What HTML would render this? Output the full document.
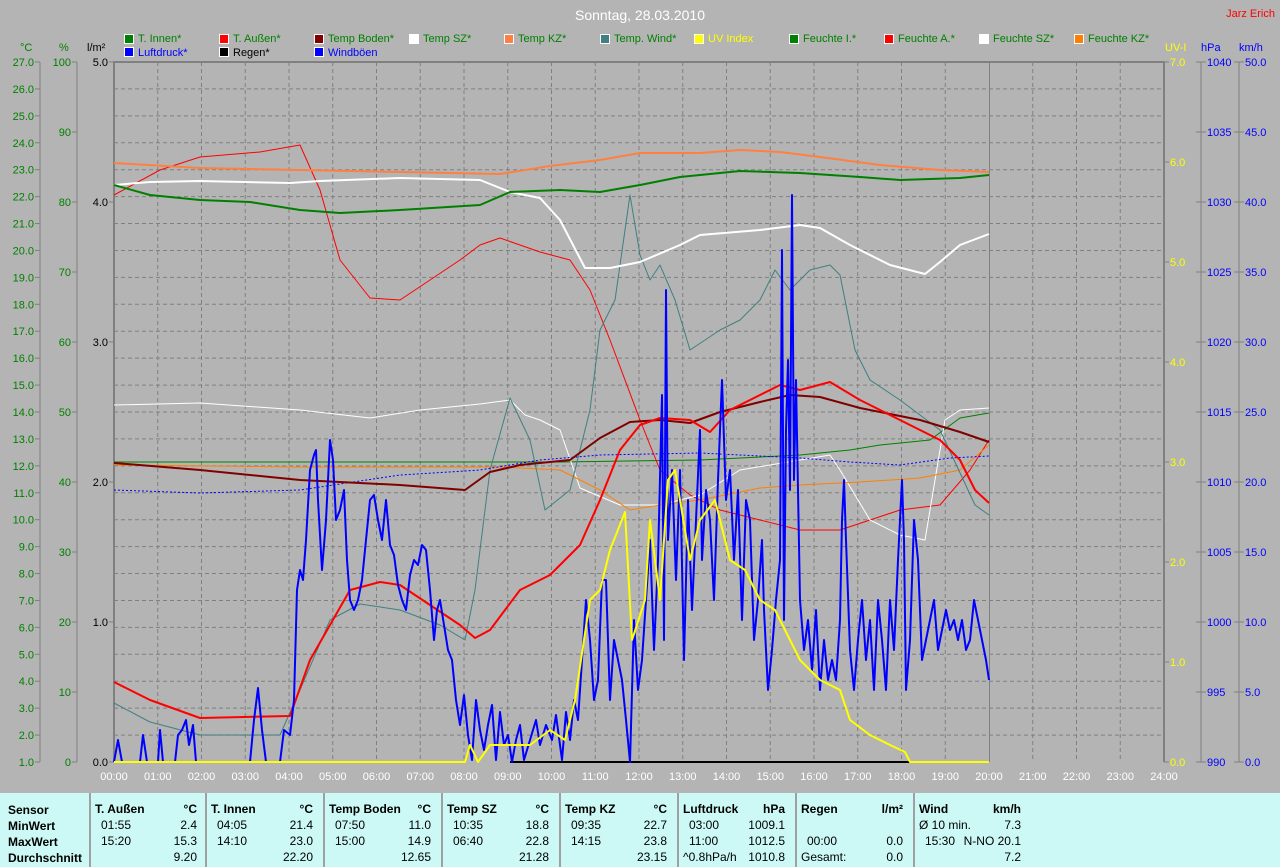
<!DOCTYPE html>
<html><head><meta charset="utf-8"><style>
body{margin:0;width:1280px;height:867px;overflow:hidden;background:#b4b4b4;font-family:"Liberation Sans",sans-serif}
svg{position:absolute;left:0;top:0}
#tbl{position:absolute;left:0;top:793px;width:1280px;height:74px;background:#ccf9f5;font-size:12px;color:#000}
.c{position:absolute;top:0;height:74px;border-left:2px solid #a0a0a0}
.r{position:absolute;white-space:nowrap}
b{font-weight:bold}
</style></head><body>
<svg width="1280" height="793" font-family="Liberation Sans, sans-serif" font-size="11">
<text x="640" y="20" fill="#fff" font-size="14" text-anchor="middle">Sonntag, 28.03.2010</text>
<text x="1275" y="17" fill="#f00" font-size="11" text-anchor="end">Jarz Erich</text>
<g stroke="#fff" stroke-width="1">
<rect x="124.5" y="34.5" width="9" height="9" fill="#008000"/><rect x="219.5" y="34.5" width="9" height="9" fill="#f00"/><rect x="314.5" y="34.5" width="9" height="9" fill="#800000"/><rect x="409.5" y="34.5" width="9" height="9" fill="#fff"/><rect x="504.5" y="34.5" width="9" height="9" fill="#ff8040"/><rect x="600.5" y="34.5" width="9" height="9" fill="#408080"/><rect x="694.5" y="34.5" width="9" height="9" fill="#ff0"/><rect x="789.5" y="34.5" width="9" height="9" fill="#008000"/><rect x="884.5" y="34.5" width="9" height="9" fill="#f00"/><rect x="979.5" y="34.5" width="9" height="9" fill="#fff"/><rect x="1074.5" y="34.5" width="9" height="9" fill="#ff8000"/>
<rect x="124.5" y="47.5" width="9" height="9" fill="#00f"/><rect x="219.5" y="47.5" width="9" height="9" fill="#000"/><rect x="314.5" y="47.5" width="9" height="9" fill="#00f"/>
</g>
<g fill="#008000"><text x="138" y="42">T. Innen*</text><text x="233" y="42">T. Außen*</text><text x="328" y="42">Temp Boden*</text><text x="423" y="42">Temp SZ*</text><text x="518" y="42">Temp KZ*</text><text x="614" y="42">Temp. Wind*</text><text x="803" y="42">Feuchte I.*</text><text x="898" y="42">Feuchte A.*</text><text x="993" y="42">Feuchte SZ*</text><text x="1088" y="42">Feuchte KZ*</text></g>
<text x="708" y="42" fill="#ff0">UV Index</text>
<text x="138" y="56" fill="#00f">Luftdruck*</text><text x="233" y="56" fill="#000">Regen*</text><text x="328" y="56" fill="#00f">Windböen</text>
<text x="20" y="51" fill="#008000">°C</text><text x="59" y="51" fill="#008000">%</text><text x="87" y="51" fill="#000">l/m²</text>
<text x="1165" y="51" fill="#ff0">UV-I</text><text x="1201" y="51" fill="#00f">hPa</text><text x="1239" y="51" fill="#00f">km/h</text>
<!-- grid -->
<g stroke="#808080" stroke-dasharray="4,3" stroke-width="1" id="grid"></g>
<g stroke="#808080" fill="none">
<line x1="40" y1="62" x2="40" y2="762"/><line x1="77" y1="62" x2="77" y2="762"/>
<line x1="1201" y1="62" x2="1201" y2="762"/><line x1="1239" y1="62" x2="1239" y2="762"/>
<line x1="989.5" y1="62" x2="989.5" y2="762"/>
<path d="M114 762V62H1164V762" stroke-width="2"/>
</g>
<g id="lab" font-size="11"></g>
<!-- series -->
<g fill="none" stroke-linejoin="round">
<polyline stroke="#008000" stroke-width="1" points="114,462 300,462 560,462 700,460 800,455 850,450 880,445 930,440 960,418 989,413"/>
<polyline stroke="#f00" stroke-width="1" points="114,195 160,170 200,157 260,152 300,145 320,190 340,260 370,298 400,300 430,280 460,260 480,245 500,238 520,245 540,252 570,260 590,290 610,340 640,420 660,470 690,495 720,510 760,520 800,530 840,530 870,520 900,510 940,505 970,470 989,440"/>
<polyline stroke="#fff" stroke-width="1" points="114,405 200,403 300,410 370,418 420,410 480,404 510,400 525,415 540,420 560,430 580,488 620,505 660,505 700,495 740,470 800,460 830,455 840,470 870,520 900,535 925,540 945,420 960,410 989,408"/>
<polyline stroke="#ff8000" stroke-width="1" points="114,465 300,467 500,467 560,470 600,490 630,510 660,505 700,500 760,488 800,485 860,482 920,478 960,470 989,445"/>
<polyline stroke="#408080" stroke-width="1" points="114,703 150,722 200,735 280,735 300,690 330,620 360,604 400,610 440,625 465,640 475,590 490,470 510,398 530,440 545,510 570,490 590,410 600,330 615,300 625,230 630,195 640,255 650,280 660,265 675,300 690,350 705,340 720,330 740,320 760,300 775,270 790,290 810,270 830,265 840,275 855,350 870,380 900,400 940,430 975,505 989,515"/>
<polyline stroke="#00f" stroke-width="1" stroke-dasharray="2,2" points="114,490 200,493 300,490 400,475 480,470 540,460 600,455 700,453 800,458 850,462 900,465 950,458 989,456"/>
<polyline stroke="#000" stroke-width="2" points="510,762 989,762"/>
<polyline stroke="#ff8040" stroke-width="2" points="114,163 200,168 300,170 400,172 500,174 550,166 600,160 640,153 700,153 740,150 780,152 820,157 880,165 940,170 989,172"/>
<polyline stroke="#fff" stroke-width="2" points="114,185 150,182 200,181 290,183 320,181 400,178 480,180 510,192 540,198 560,220 585,268 610,268 640,262 680,245 700,235 760,230 800,225 820,228 850,245 890,265 925,274 940,262 960,245 989,234"/>
<polyline stroke="#008000" stroke-width="2" points="114,185 150,195 200,200 250,202 300,210 340,213 400,210 480,205 510,192 560,190 600,192 640,185 680,177 740,171 800,173 860,177 900,180 960,178 989,175"/>
<polyline stroke="#800000" stroke-width="2" points="114,463 200,470 300,480 400,485 465,490 490,472 520,465 570,460 600,438 630,422 660,420 690,423 720,412 760,402 790,395 820,397 860,408 920,420 960,432 989,442"/>
<polyline stroke="#f00" stroke-width="2" points="114,682 150,700 200,718 290,716 310,660 350,590 380,582 400,585 430,605 460,625 475,638 490,630 520,590 550,575 580,545 600,500 620,450 640,425 660,418 690,420 710,432 730,410 780,385 800,390 830,382 860,400 900,420 940,440 960,460 975,490 989,503"/>
<polyline stroke="#00f" stroke-width="2" points="114,762 118,740 122,762 140,762 143,735 147,762 158,762 160,730 163,762 175,762 178,735 182,730 186,720 189,745 193,725 196,762 250,762 254,720 258,688 262,730 266,762 280,762 284,730 290,735 294,700 297,590 300,570 303,580 306,540 310,470 314,455 316,450 318,500 322,570 326,520 330,440 333,460 336,520 340,510 344,490 347,560 350,600 354,610 358,600 362,580 366,540 370,500 374,495 378,520 382,540 386,500 390,545 394,555 398,585 402,600 406,610 410,575 414,560 418,565 422,545 426,550 430,590 434,640 437,610 440,600 444,625 448,650 452,660 456,700 460,725 464,695 468,735 472,760 476,700 480,730 484,750 488,725 492,705 496,760 500,712 504,745 508,735 512,762 516,740 520,725 524,760 530,740 536,720 540,745 546,725 552,740 556,715 562,760 566,712 570,740 574,700 578,720 582,660 586,600 590,640 594,700 598,680 602,580 606,580 610,700 614,640 618,660 622,680 626,720 630,762 634,620 638,690 642,660 646,600 650,540 654,650 658,560 662,395 664,640 666,290 668,540 672,470 676,580 680,470 684,660 688,500 692,610 696,520 700,430 702,560 706,490 710,520 714,600 718,480 722,380 726,500 730,470 734,560 738,490 742,620 746,500 750,520 754,640 758,600 762,540 764,610 768,690 772,650 776,600 780,560 782,250 784,620 786,430 788,360 790,490 792,195 794,480 796,380 800,600 804,650 808,620 812,670 816,610 820,690 824,640 828,680 832,660 836,680 840,620 842,520 844,480 846,540 850,650 854,690 858,640 862,600 866,660 870,620 874,690 878,600 882,640 886,690 890,600 894,650 898,560 902,480 904,540 906,690 910,640 914,520 918,560 922,660 926,640 930,620 934,600 938,650 942,630 946,610 950,630 954,620 958,640 962,620 966,650 970,640 974,600 978,620 982,640 986,660 989,680"/>
<polyline stroke="#ff0" stroke-width="2" points="114,762 465,762 470,745 478,762 490,745 530,745 550,730 565,740 575,700 590,600 600,590 610,550 625,512 632,640 645,600 650,520 660,600 668,480 675,470 690,560 700,520 715,500 730,560 745,570 760,600 775,610 790,640 800,660 820,680 840,690 850,720 870,735 890,745 905,752 910,762 989,762"/>
</g>
</svg>
<div id="tbl">
<div class="r" style="left:8px;top:9px;line-height:16px"><b>Sensor<br>MinWert<br>MaxWert<br>Durchschnitt</b></div>
</div>
<script>
var g=document.getElementById('grid'),L=document.getElementById('lab'),ns='http://www.w3.org/2000/svg';
function el(p,t,a){var e=document.createElementNS(ns,t);for(var k in a)e.setAttribute(k,a[k]);p.appendChild(e);return e}
for(var i=1;i<26;i++){var y=62+i*700/26;el(g,'line',{x1:114,x2:1164,y1:y,y2:y});}
for(var h=1;h<24;h++){if(h==20)continue;var x=114+h*43.75;el(g,'line',{x1:x,x2:x,y1:62,y2:762});}
function tx(x,y,s,c,a){var t=el(L,'text',{x:x,y:y,fill:c,'text-anchor':a||'end'});t.textContent=s;}
function tk(x1,x2,y){el(L,'line',{x1:x1,x2:x2,y1:y,y2:y,stroke:'#808080'});}
for(i=0;i<=26;i++){var y=62+i*700/26;tx(34,y+4,(27-i).toFixed(1),'#008000');tk(35,40,y);}
for(i=0;i<=10;i++){var y=62+i*70;tx(71,y+4,String(100-i*10),'#008000');tk(72,77,y);}
for(i=0;i<=5;i++){var y=62+i*140;tx(108,y+4,(5-i).toFixed(1),'#000');tk(109,114,y);}
for(i=0;i<=7;i++){var y=62+i*100;tx(1170,y+4,(7-i).toFixed(1),'#ff0','start');tk(1164,1169,y);}
for(i=0;i<=10;i++){var y=62+i*70;tx(1207,y+4,String(1040-i*5),'#00f','start');tk(1196,1206,y);tx(1245,y+4,(50-i*5).toFixed(1),'#00f','start');tk(1234,1244,y);}
for(h=0;h<=24;h++){tx(114+h*43.75,780,(h<10?'0':'')+h+':00','#fff','middle');}
var T=document.getElementById('tbl');
var cols=[[89,'T. Außen','°C',['01:55','2.4'],['15:20','15.3'],['','9.20']],
[205,'T. Innen','°C',['04:05','21.4'],['14:10','23.0'],['','22.20']],
[323,'Temp Boden','°C',['07:50','11.0'],['15:00','14.9'],['','12.65']],
[441,'Temp SZ','°C',['10:35','18.8'],['06:40','22.8'],['','21.28']],
[559,'Temp KZ','°C',['09:35','22.7'],['14:15','23.8'],['','23.15']],
[677,'Luftdruck','hPa',['03:00','1009.1'],['11:00','1012.5'],['^0.8hPa/h','1010.8']],
[795,'Regen','l/m²',['',''],['00:00','0.0'],['Gesamt:','0.0']],
[913,'Wind','km/h',['Ø 10 min.','7.3'],['15:30','N-NO 20.1'],['','7.2']]];
cols.forEach(function(c){var d=document.createElement('div');d.className='c';d.style.left=c[0]+'px';d.style.width='114px';
var h='<div class="r" style="left:4px;top:9px"><b>'+c[1]+'</b></div><div class="r" style="right:8px;top:9px"><b>'+c[2]+'</b></div>';
for(var r=0;r<3;r++){var t=9+16*(r+1);var lp=(c[3+r][0]=='Gesamt:'||c[3+r][0]=='Ø 10 min.'||c[3+r][0].charAt(0)=='^')?4:10;
h+='<div class="r" style="left:'+lp+'px;top:'+t+'px">'+c[3+r][0]+'</div><div class="r" style="right:8px;top:'+t+'px">'+c[3+r][1]+'</div>';}
d.innerHTML=h;T.appendChild(d);});
</script>
</body></html>
